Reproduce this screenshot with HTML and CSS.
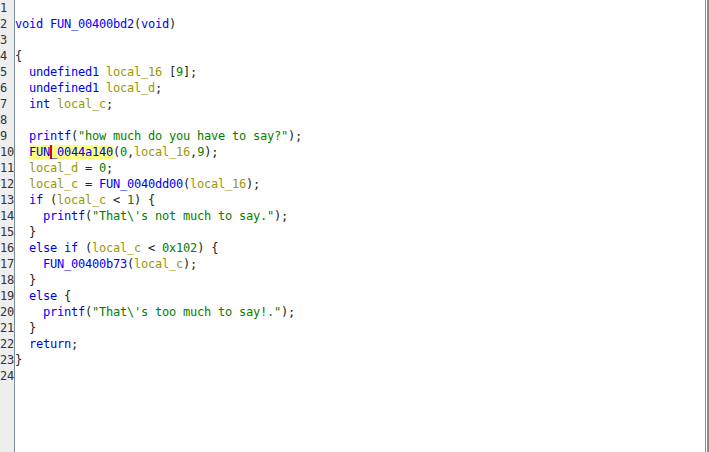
FILE: index.html
```html
<!DOCTYPE html>
<html>
<head>
<meta charset="utf-8">
<link rel="stylesheet" href="styles.css">
</head>
<body>
<div class="editor">
  <div class="gutter">
    <div class="ln">1</div><div class="ln">2</div><div class="ln">3</div><div class="ln">4</div><div class="ln">5</div><div class="ln">6</div><div class="ln">7</div><div class="ln">8</div><div class="ln">9</div><div class="ln">10</div><div class="ln">11</div><div class="ln">12</div><div class="ln">13</div><div class="ln">14</div><div class="ln">15</div><div class="ln">16</div><div class="ln">17</div><div class="ln">18</div><div class="ln">19</div><div class="ln">20</div><div class="ln">21</div><div class="ln">22</div><div class="ln">23</div><div class="ln">24</div>
  </div>
  <div class="code">
<div class="line"> </div>
<div class="line"><span class="kw">void</span> <span class="fn">FUN_00400bd2</span><span class="p">(</span><span class="kw">void</span><span class="p">)</span></div>
<div class="line"> </div>
<div class="line"><span class="p">{</span></div>
<div class="line">  <span class="kw">undefined1</span> <span class="var">local_16</span> <span class="p">[</span><span class="num">9</span><span class="p">];</span></div>
<div class="line">  <span class="kw">undefined1</span> <span class="var">local_d</span><span class="p">;</span></div>
<div class="line">  <span class="kw">int</span> <span class="var">local_c</span><span class="p">;</span></div>
<div class="line"> </div>
<div class="line">  <span class="fn">printf</span><span class="p">(</span><span class="num">"how much do you have to say?"</span><span class="p">);</span></div>
<div class="line">  <span class="fn hl">FUN<span class="caret"></span>_0044a140</span><span class="p">(</span><span class="num">0</span><span class="p">,</span><span class="var">local_16</span><span class="p">,</span><span class="num">9</span><span class="p">);</span></div>
<div class="line">  <span class="var">local_d</span><span class="p"> = </span><span class="num">0</span><span class="p">;</span></div>
<div class="line">  <span class="var">local_c</span><span class="p"> = </span><span class="fn">FUN_0040dd00</span><span class="p">(</span><span class="var">local_16</span><span class="p">);</span></div>
<div class="line">  <span class="kw">if</span><span class="p"> (</span><span class="var">local_c</span><span class="p"> &lt; </span><span class="num">1</span><span class="p">) {</span></div>
<div class="line">    <span class="fn">printf</span><span class="p">(</span><span class="num">"That\'s not much to say."</span><span class="p">);</span></div>
<div class="line">  <span class="p">}</span></div>
<div class="line">  <span class="kw">else</span> <span class="kw">if</span><span class="p"> (</span><span class="var">local_c</span><span class="p"> &lt; </span><span class="num">0x102</span><span class="p">) {</span></div>
<div class="line">    <span class="fn">FUN_00400b73</span><span class="p">(</span><span class="var">local_c</span><span class="p">);</span></div>
<div class="line">  <span class="p">}</span></div>
<div class="line">  <span class="kw">else</span><span class="p"> {</span></div>
<div class="line">    <span class="fn">printf</span><span class="p">(</span><span class="num">"That\'s too much to say!."</span><span class="p">);</span></div>
<div class="line">  <span class="p">}</span></div>
<div class="line">  <span class="kw">return</span><span class="p">;</span></div>
<div class="line"><span class="p">}</span></div>
<div class="line"> </div>
  </div>
  <div class="edge"></div>
</div>
</body>
</html>
```

FILE: styles.css
```css
html, body {
  margin: 0;
  padding: 0;
  background: #ffffff;
}
.editor {
  display: flex;
  width: 709px;
  height: 452px;
  overflow: hidden;
  font-family: "DejaVu Sans Mono", monospace;
  font-size: 12px;
  letter-spacing: -0.224px;
  line-height: 16px;
}
.gutter {
  width: 14px;
  flex: none;
  background: #eeeeee;
  border-right: 1px solid #7b8c9c;
  color: #333333;
}
.ln {
  height: 16px;
  white-space: pre;
}
.code {
  flex: 1;
  color: #222222;
}
.line {
  height: 16px;
  white-space: pre;
}
.kw { color: #0000f0; }
.fn { color: #0000ff; }
.var { color: #999900; }
.num { color: #008000; }
.p { color: #222222; }
.hl {
  background: #ffff80;
}
.caret {
  display: inline-block;
  width: 2px;
  height: 14px;
  margin-right: -2px;
  background: #e00000;
  vertical-align: -3px;
}
.edge {
  flex: none;
  width: 4px;
  box-sizing: border-box;
  border-left: 1px solid #8a8a8a;
  border-right: 2px solid #8a8a8a;
}
```
